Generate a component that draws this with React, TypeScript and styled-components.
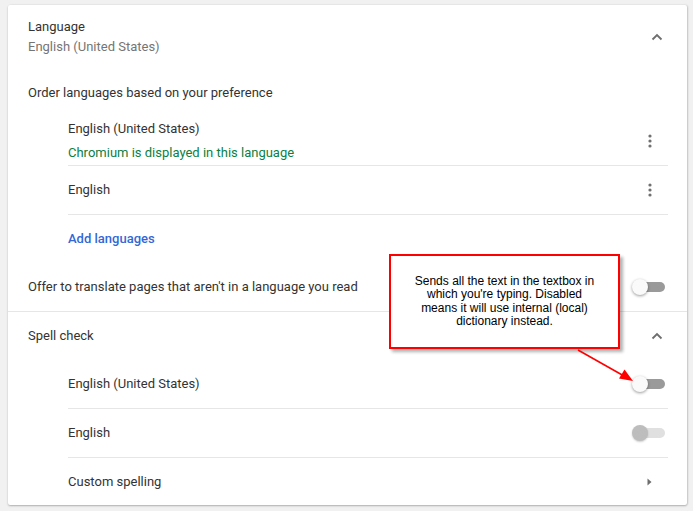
import React from "react";
import styled, { createGlobalStyle } from "styled-components";

const Global = createGlobalStyle`
  *, *::before, *::after { box-sizing: border-box; }
  html, body { margin: 0; padding: 0; background: #f1f1f1; }
  body { font-family: Roboto, "Noto Sans", Arial, sans-serif; }
`;

const Page = styled.div`
  position: relative;
  width: 693px;
  height: 511px;
  padding: 5px 6px 0 8px;
`;

const Card = styled.div`
  width: 679px;
  background: #fff;
  border-radius: 2px;
  box-shadow: 0 1px 2px rgba(0, 0, 0, 0.25), 1px 0 2px rgba(0, 0, 0, 0.12);
  color: #333;
  font-size: 13px;
`;

const Section = styled.div<{ $top?: boolean }>`
  border-top: ${(p) => (p.$top ? "1px solid #e6e6e6" : "none")};
`;

const Row = styled.div<{ $h: number; $pr?: number; $pt?: number }>`
  display: flex;
  align-items: center;
  justify-content: space-between;
  height: ${(p) => p.$h}px;
  padding: ${(p) => p.$pt ?? 0}px ${(p) => p.$pr ?? 20}px 0 20px;
`;

const List = styled.div`
  margin: 0 19px 0 60px;
`;

const ListRow = styled.div<{ $h: number; $divider?: boolean; $pr?: number }>`
  display: flex;
  align-items: center;
  justify-content: space-between;
  height: ${(p) => p.$h}px;
  padding-right: ${(p) => p.$pr ?? 16}px;
  border-top: ${(p) => (p.$divider ? "1px solid #e6e6e6" : "none")};
`;

const Stack = styled.div<{ $gap: number }>`
  display: flex;
  flex-direction: column;
  gap: ${(p) => p.$gap}px;
`;

const Line = styled.div<{ $tone?: "main" | "sub" | "green" }>`
  line-height: 20px;
  color: ${(p) =>
    p.$tone === "sub" ? "#757575" : p.$tone === "green" ? "#0b8043" : "#333"};
`;

const LinkText = styled.div`
  color: #3367d6;
  font-weight: 500;
  line-height: 20px;
`;

const IconBox = styled.div<{ $w: number }>`
  width: ${(p) => p.$w}px;
  display: flex;
  align-items: center;
  justify-content: center;
`;

const ToggleWrap = styled.div`
  position: relative;
  width: 33px;
  height: 16px;
`;

const Track = styled.div<{ $disabled?: boolean }>`
  position: absolute;
  right: 0;
  top: 3px;
  width: 28px;
  height: 10px;
  border-radius: 5px;
  background: ${(p) => (p.$disabled ? "#e0e0e0" : "#9a9a9a")};
`;

const Knob = styled.div<{ $disabled?: boolean }>`
  position: absolute;
  left: 0;
  top: 0;
  width: 16px;
  height: 16px;
  border-radius: 50%;
  background: ${(p) => (p.$disabled ? "#bdbdbd" : "#fafafa")};
  box-shadow: ${(p) =>
    p.$disabled ? "0 1px 2px rgba(0,0,0,0.2)" : "0 1px 3px rgba(0,0,0,0.4)"};
`;

const Callout = styled.div`
  position: absolute;
  left: 389px;
  top: 254px;
  width: 231px;
  height: 95px;
  border: 2px solid #ff0000;
  background: #fff;
  box-shadow: 3px 3px 3px rgba(0, 0, 0, 0.3);
  display: flex;
  align-items: center;
  justify-content: center;
  padding: 0 8px;
  text-align: center;
  font-family: "Liberation Sans", Arial, sans-serif;
  font-size: 12px;
  line-height: 13.5px;
  color: #000;
`;

const ArrowSvg = styled.svg`
  position: absolute;
  left: 0;
  top: 0;
  pointer-events: none;
`;

const ChevronUp = () => (
  <IconBox $w={20}>
    <svg width="12" height="8" viewBox="0 0 12 8">
      <path d="M1.5 6.5 L6 2 L10.5 6.5" fill="none" stroke="#6e6e6e" strokeWidth="1.8" />
    </svg>
  </IconBox>
);

const Dots = () => (
  <IconBox $w={4}>
    <svg width="4" height="14" viewBox="0 0 4 14">
      <circle cx="2" cy="2" r="1.6" fill="#707070" />
      <circle cx="2" cy="7" r="1.6" fill="#707070" />
      <circle cx="2" cy="12" r="1.6" fill="#707070" />
    </svg>
  </IconBox>
);

const Caret = () => (
  <IconBox $w={5}>
    <svg width="5" height="8" viewBox="0 0 5 8">
      <path d="M0.5 0.5 L4.5 4 L0.5 7.5 Z" fill="#6e6e6e" />
    </svg>
  </IconBox>
);

const Toggle = ({ disabled }: { disabled?: boolean }) => (
  <ToggleWrap>
    <Track $disabled={disabled} />
    <Knob $disabled={disabled} />
  </ToggleWrap>
);

export default function App() {
  return (
    <>
      <Global />
      <Page>
        <Card>
          <Section>
            <Row $h={62} $pr={20} $pt={2}>
              <Stack $gap={0}>
                <Line>Language</Line>
                <Line $tone="sub">English (United States)</Line>
              </Stack>
              <ChevronUp />
            </Row>
            <Row $h={50} $pt={2}>
              <Line>Order languages based on your preference</Line>
            </Row>
            <List>
              <ListRow $h={48}>
                <Stack $gap={4}>
                  <Line>English (United States)</Line>
                  <Line $tone="green">Chromium is displayed in this language</Line>
                </Stack>
                <Dots />
              </ListRow>
              <ListRow $h={49} $divider>
                <Line>English</Line>
                <Dots />
              </ListRow>
              <ListRow $h={48} $divider>
                <LinkText>Add languages</LinkText>
              </ListRow>
            </List>
            <Row $h={49} $pr={22}>
              <Line>Offer to translate pages that aren't in a language you read</Line>
              <Toggle />
            </Row>
          </Section>
          <Section $top>
            <Row $h={47} $pr={20}>
              <Line>Spell check</Line>
              <ChevronUp />
            </Row>
            <List>
              <ListRow $h={49} $pr={3}>
                <Line>English (United States)</Line>
                <Toggle />
              </ListRow>
              <ListRow $h={49} $pr={3} $divider>
                <Line>English</Line>
                <Toggle disabled />
              </ListRow>
              <ListRow $h={48} $pr={16} $divider>
                <Line>Custom spelling</Line>
                <Caret />
              </ListRow>
            </List>
          </Section>
        </Card>
        <Callout>
          <div>
            Sends all the text in the textbox in
            <br />
            which you're typing. Disabled
            <br />
            means it will use internal (local)
            <br />
            dictionary instead.
          </div>
        </Callout>
        <ArrowSvg width="693" height="511" viewBox="0 0 693 511">
          <line x1="578" y1="350" x2="624" y2="376" stroke="#ff0000" strokeWidth="1.6" />
          <path d="M633 381 L619 378.5 L624.5 369.5 Z" fill="#ff0000" />
        </ArrowSvg>
      </Page>
    </>
  );
}
